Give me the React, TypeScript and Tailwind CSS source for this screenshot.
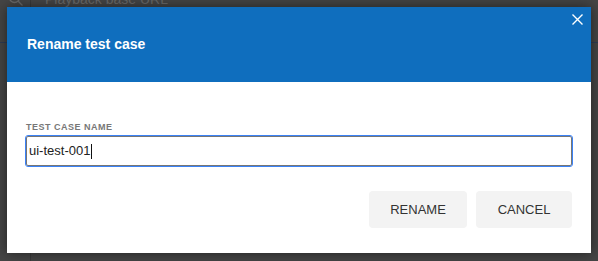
import React from "react";

export default function App() {
  return (
    <div
      className="relative w-[598px] h-[261px] overflow-hidden bg-[#454545]"
      style={{ fontFamily: '"Liberation Sans", Arial, sans-serif' }}
    >
      {/* faint underlying app */}
      <div className="absolute left-0 top-0 w-full h-full">
        <div className="absolute left-[30px] top-0 w-px h-full bg-[#3a3a3a]" />
        <div className="absolute left-0 top-[42px] w-full h-px bg-[#2f3b52]" />
        <svg className="absolute left-[8px] top-[-9px]" width="16" height="16" viewBox="0 0 16 16" fill="none" stroke="#6a6a6a" strokeWidth="1.3">
          <circle cx="6.5" cy="6.5" r="5" />
          <path d="M10.2 10.2 L14.5 14.5" />
        </svg>
        <div className="absolute left-[45px] top-[-9px] text-[14px] leading-[16px] text-[#6a6a6a]">Playback base URL</div>
      </div>

      {/* dialog */}
      <div className="absolute left-[7px] top-[7px] w-[584px] h-[246px] bg-white flex flex-col shadow-[0_0_12px_rgba(0,0,0,0.5)]">
        <div className="relative h-[75px] bg-[#0f6ebe] flex items-center pl-[20px]">
          <span className="text-white font-bold text-[14px]">Rename test case</span>
          <svg className="absolute right-[8px] top-[7px]" width="11" height="11" viewBox="0 0 11 11" stroke="white" strokeWidth="1.4">
            <path d="M0.5 0.5 L10.5 10.5 M10.5 0.5 L0.5 10.5" />
          </svg>
        </div>
        <div className="flex flex-col px-[19px] pt-[40px]">
          <label className="text-[9px] font-bold text-[#777] tracking-[0.5px] leading-[11px] mb-[3px]">TEST CASE NAME</label>
          <div className="h-[30px] w-full border border-[#767676] rounded-[2px] outline outline-1 outline-[#3b82f6] flex items-center pl-[2px] text-[13px] text-[#222]">
            <span>ui-test-001</span>
            <span className="w-px h-[15px] bg-[#111] ml-[1px]" />
          </div>
          <div className="flex justify-end gap-[9px] mt-[25px]">
            <button className="w-[98px] h-[37px] rounded-[4px] bg-[#f3f3f3] text-[13px] text-[#333]">RENAME</button>
            <button className="w-[96px] h-[37px] rounded-[4px] bg-[#f3f3f3] text-[13px] text-[#333]">CANCEL</button>
          </div>
        </div>
      </div>
    </div>
  );
}
